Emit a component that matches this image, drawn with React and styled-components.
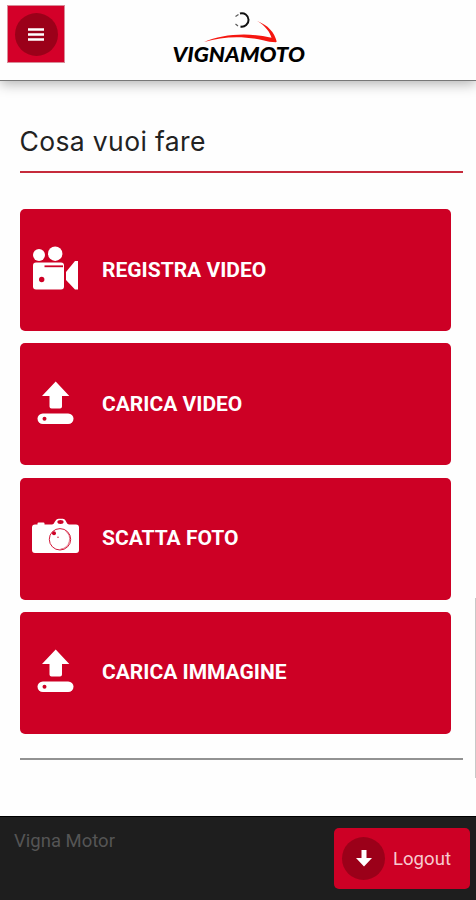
import React from 'react';
import styled, { createGlobalStyle } from 'styled-components';

const ACTIONS = [
  { label: 'REGISTRA VIDEO', icon: 'video' },
  { label: 'CARICA VIDEO', icon: 'upload' },
  { label: 'SCATTA FOTO', icon: 'camera' },
  { label: 'CARICA IMMAGINE', icon: 'upload' },
];

const VideoIcon = () => (
  <svg width="48" height="48" viewBox="0 0 48 48" fill="#fff">
    <circle cx="7" cy="9" r="6" />
    <circle cx="23.2" cy="7.7" r="7.2" />
    <rect x="1" y="16.5" width="31" height="27" rx="3" />
    <path d="M34 26 43 15h3v28.5h-3L34 34z" />
    <path d="M12.5 20.3H31" stroke="#cd0025" strokeWidth="1.8" />
    <circle cx="9.7" cy="33.5" r="2.7" fill="#cd0025" />
  </svg>
);

const UploadIcon = () => (
  <svg width="48" height="48" viewBox="0 -0.5 48 48" fill="#fff">
    <path d="M23.7 1 37.3 15.6H30V26q0 2-2 2h-8.5q-2 0-2-2V15.6H10z" />
    <rect x="5.5" y="33" width="36" height="10.6" rx="5.3" />
    <circle cx="12.5" cy="38.3" r="2" fill="#cd0025" />
  </svg>
);

const CameraIcon = () => (
  <svg width="48" height="48" viewBox="0 -1 48 48" fill="#fff">
    <path d="M3 9.5h2.500V8.5q0-1 1-1h5q1 0 1 1v1H20q2-.5 3-3l.7-1q.8-1.800 3-1.800h4q2 0 2.800 1.800l.8 1.500q.8 2 2.700 2.500h7q3 0 3 3V35q0 3-3 3H3q-3 0-3-3V12.500q0-3 3-3z" />
    <ellipse cx="28.5" cy="7" rx="3.1" ry="1.9" fill="#cd0025" />
    <circle cx="28" cy="24.3" r="10.7" fill="none" stroke="#cd0025" strokeWidth=".9" />
    <path d="M33.5 16a10 10 0 0 1-5 18" fill="none" stroke="#cd0025" strokeWidth=".5" />
    <circle cx="22" cy="18.3" r="2" fill="#cd0025" />
    <circle cx="26" cy="22.3" r=".7" fill="#cd0025" />
  </svg>
);

const ICONS = { video: VideoIcon, upload: UploadIcon, camera: CameraIcon };

const Logo = () => (
  <svg width="140" height="60" viewBox="0 0 140 60">
    <g fill="none" stroke="#111">
      <path d="M70 8.5A6.7 6.7 0 1 1 70.500 21.500" strokeWidth="2" />
      <path d="M68.500 9.500 65.500 11.500M65.500 19l2.500 2" strokeWidth="1.200" opacity=".7" />
    </g>
    <path
      d="M34 37C52 29.500 77 27 101.500 32.800c-1.500-5.500-6-12-14.500-16.800 11 4 17.500 11.500 19.700 20.500l-.7.8c-4.500-.1-9-.8-13-2C72 30.300 53 31.500 34 37z"
      fill="#f5160f"
    />
    <text
      x="2.5"
      y="57"
      textLength="132.5"
      lengthAdjust="spacingAndGlyphs"
      fontFamily="Lato, sans-serif"
      fontSize="20"
      fontWeight="900"
      fontStyle="italic"
    >
      VIGNAMOTO
    </text>
  </svg>
);

const App = () => (
  <>
    <GlobalStyle />
    <Page>
      <Header>
        <MenuButton aria-label="Menu">
          <RoundIcon>
            <svg width="16" height="13" viewBox="0 0 16 13">
              <path d="M0 1.500h16M0 6.500h16M0 11.500h16" stroke="#fff" strokeWidth="2.700" />
            </svg>
          </RoundIcon>
        </MenuButton>
        <Logo />
      </Header>

      <Main>
        <Title>Cosa vuoi fare</Title>
        <ActionList>
          {ACTIONS.map(({ label, icon }) => {
            const Icon = ICONS[icon];
            return (
              <ActionButton key={label}>
                <Icon />
                <span>{label}</span>
              </ActionButton>
            );
          })}
        </ActionList>
        <Divider />
      </Main>

      <Footer>
        <Brand>Vigna Motor</Brand>
        <LogoutButton>
          <RoundIcon>
            <svg width="16" height="17" viewBox="0 0 16 17">
              <path d="M5.500 0h5v8H16l-8 8.500L0 8h5.500z" fill="#fff" />
            </svg>
          </RoundIcon>
          <span>Logout</span>
        </LogoutButton>
      </Footer>
      <ScrollThumb />
    </Page>
  </>
);

const GlobalStyle = createGlobalStyle`
  * {
    box-sizing: border-box;
  }

  body {
    margin: 0;
    background: #fefefe;
    font-family: Roboto, sans-serif;
  }

  button {
    border: 0;
    padding: 0;
    font-family: inherit;
    cursor: pointer;
  }

  svg {
    display: block;
    flex-shrink: 0;
  }
`;

const Page = styled.div`
  position: relative;
  display: flex;
  flex-direction: column;
  width: 476px;
  height: 900px;
  overflow: hidden;
`;

const Header = styled.header`
  display: grid;
  grid-template-columns: 58px 140px;
  column-gap: 105px;
  align-items: start;
  height: 81px;
  padding: 5px 0 0 7px;
  background: #fefefe;
  border-bottom: 1px solid #777;
  box-shadow: 0 3px 12px rgba(0, 0, 0, 0.3);
`;

const MenuButton = styled.button`
  display: flex;
  align-items: center;
  justify-content: center;
  width: 58px;
  height: 58px;
  background: #d40029;
  border: 1px solid #d88c98;
`;

const RoundIcon = styled.span`
  display: flex;
  align-items: center;
  justify-content: center;
  width: 43px;
  height: 43px;
  border-radius: 50%;
  background: #9b0019;
`;

const Main = styled.main`
  flex: 1;
  padding: 42px 13px 0 19.5px;
`;

const Title = styled.h1`
  height: 50px;
  margin: 0;
  border-bottom: 2px solid #c62b3c;
  color: #222;
  font-family: Inter, sans-serif;
  font-size: 26.5px;
  font-weight: 400;
  line-height: 37px;
  letter-spacing: 0.36px;
`;

const ActionList = styled.div`
  display: flex;
  flex-direction: column;
  gap: 12.3px;
  margin: 36px 12.5px 0 0;
`;

const ActionButton = styled.button`
  display: flex;
  align-items: center;
  gap: 22px;
  height: 122px;
  padding: 0 0 1px 12.5px;
  border-radius: 5px;
  background: #cd0025;
  color: #fff;
  font-size: 21px;
  font-weight: 700;
`;

const Divider = styled.hr`
  height: 2px;
  margin: 24px 0 0;
  border: 0;
  background: #929292;
`;

const Footer = styled.footer`
  display: flex;
  justify-content: space-between;
  height: 84px;
  padding: 11px 6px 0 14px;
  background: #1e1e1e;
  border-top: 1px solid #000;
`;

const Brand = styled.span`
  padding-top: 2px;
  color: #555;
  font-size: 18.5px;
  line-height: 22px;
`;

const LogoutButton = styled.button`
  display: flex;
  align-items: center;
  gap: 8px;
  width: 136px;
  height: 61px;
  padding-left: 8px;
  border-radius: 5px;
  background: #cd0025;
  color: #f7c9cf;
  font-size: 18.6px;
`;

const ScrollThumb = styled.div`
  position: absolute;
  top: 598px;
  right: 0;
  width: 1px;
  height: 180px;
  background: #c8c8c8;
`;

export default App;
